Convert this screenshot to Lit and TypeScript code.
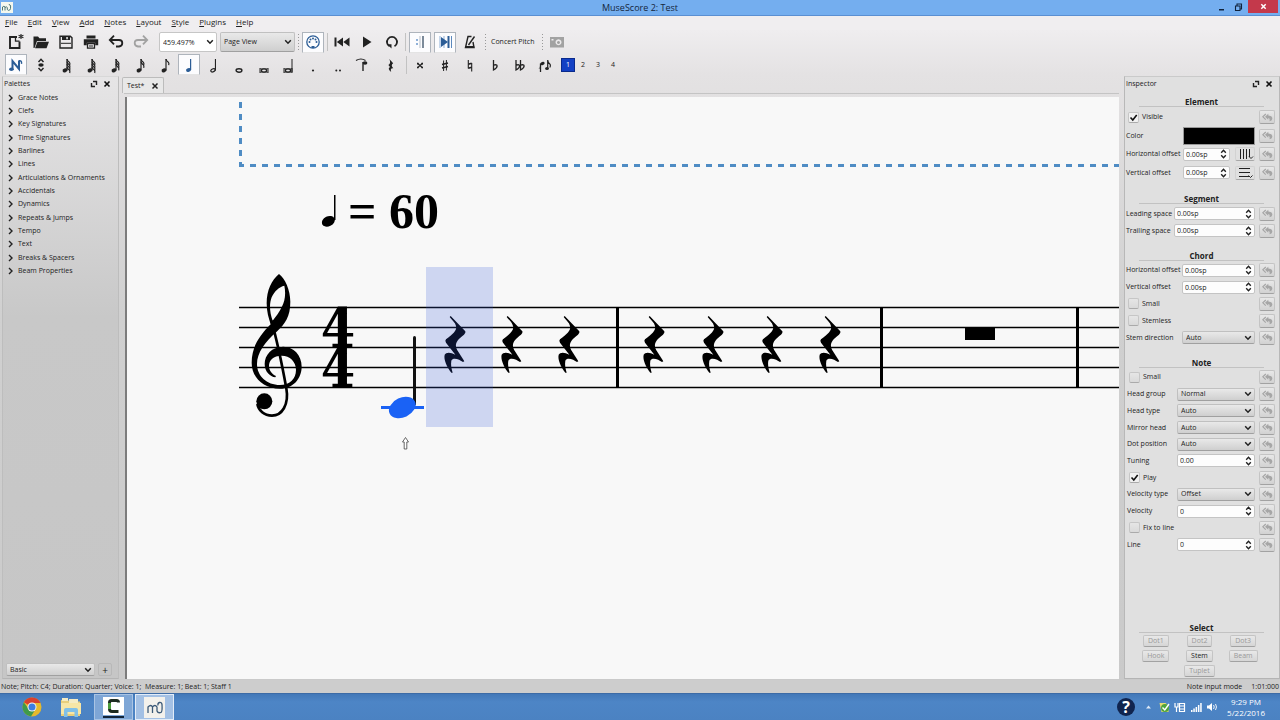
import { LitElement, html, svg, css, nothing } from "lit";
import { customElement } from "lit/decorators.js";
import { classMap } from "lit/directives/class-map.js";

const PALETTES = [
  "Grace Notes", "Clefs", "Key Signatures", "Time Signatures", "Barlines", "Lines",
  "Articulations & Ornaments", "Accidentals", "Dynamics", "Repeats & Jumps", "Tempo",
  "Text", "Breaks & Spacers", "Beam Properties",
];
const MENUS = ["File", "Edit", "View", "Add", "Notes", "Layout", "Style", "Plugins", "Help"];

const icon = (body: unknown, w = 20, h = 18) =>
  html`<svg width=${w} height=${h} viewBox="0 0 ${w} ${h}" aria-hidden="true">${body}</svg>`;

/* A filled note with a stem and a number of flags. */
const flagged = (flags: number) => {
  const rows = Array.from({ length: flags }, (_, i) => 3 + i * 2.6);
  return svg`<ellipse cx="9" cy="14.400" rx="2.500" ry="1.900" transform="rotate(-20 9 14.400)"/>
    <path d="M11 14.500V3" stroke="currentColor" stroke-width="1.200" fill="none"/>
    ${rows.map((y) => svg`<path d=${`M11 ${y}q.3 2 2.3 3.2q1 1 .4 3`} stroke="currentColor" stroke-width="1.2" fill="none"/>`)}`;
};
const breve = svg`<ellipse cx="10" cy="14.5" rx="2.6" ry="1.6" fill="none" stroke="currentColor" stroke-width="1.3"/>
  <path d="M6 12v5M14 12v5" stroke="currentColor" stroke-width="1"/><path d="M6 12.8h8M6 16.2h8" stroke="currentColor" stroke-width=".7"/>`;
const flat = (x: number) => svg`<path d=${`M${x} 4v10q3.6-2 3.6-4t-3.6-.8`} fill="none" stroke="currentColor" stroke-width="1.3"/>`;

const NOTE_ICONS: Array<[string, unknown, boolean]> = [
  ["Note input", svg`<path d="M6.500 14V5L13 13V4.500" fill="none" stroke="#2c5d96" stroke-width="2"/><ellipse cx="5.400" cy="13.200" rx="2.300" ry="1.800" fill="#2c5d96"/><path d="M13 4.800q3-.5 2.500 3" fill="none" stroke="#2c5d96" stroke-width="1.400"/>`, true],
  ["Repitch", svg`<path d="M7.500 6L10 3.2L12.500 6M7.500 12L10 14.800L12.500 12" fill="none" stroke="currentColor" stroke-width="1.400"/><ellipse cx="10" cy="9" rx="2.700" ry="1.800"/>`, false],
  ["64th", flagged(4), false],
  ["32nd triple", flagged(4), false],
  ["32nd", flagged(3), false],
  ["16th", flagged(2), false],
  ["Eighth", flagged(1), false],
  ["Quarter", svg`<g fill="#2c5d96"><ellipse cx="9.500" cy="14" rx="2.500" ry="1.900" transform="rotate(-20 9.500 14)"/><path d="M11 3h1.200v11H11z"/></g>`, true],
  ["Half", svg`<ellipse cx="9" cy="14.300" rx="2.300" ry="1.500" fill="none" stroke="currentColor" stroke-width="1.200" transform="rotate(-25 9 14.300)"/><path d="M10.900 3h1.100v11.500h-1.100z"/>`, false],
  ["Whole", svg`<ellipse cx="10" cy="14.500" rx="2.900" ry="1.700" fill="none" stroke="currentColor" stroke-width="1.400"/>`, false],
  ["Breve", breve, false],
  ["Longa", svg`${breve}<path d="M13.500 3h1v13h-1z"/>`, false],
  ["Dot", svg`<circle cx="10" cy="14.500" r="1.100"/>`, false],
  ["Double dot", svg`<circle cx="8.300" cy="14.500" r="1"/><circle cx="12" cy="14.500" r="1"/>`, false],
  ["Tie", svg`<path d="M3 4.500q5-3 9.500 0" fill="none" stroke="currentColor" stroke-width="1.200"/><path d="M10 15V6" fill="none" stroke="currentColor" stroke-width="1.400"/><ellipse cx="12" cy="7" rx="2.400" ry="1.700"/>`, false],
];
const REST_ICON = svg`<path d="M8.300 3L12.200 7.300Q9.300 9.300 12.300 12.300Q8.800 11.800 10.200 16Q6 12.700 9 11L7.400 9Q10.300 7.300 8.300 3Z"/>`;
const ACCIDENTALS: Array<[string, unknown]> = [
  ["Double sharp", svg`<path d="M7.500 7.300L12.500 11.800M12.500 7.300L7.500 11.800" stroke="currentColor" stroke-width="1.200"/><path d="M7 6.800h1.600v1.600H7zM11.400 6.800h1.600v1.600h-1.600zM7 10.700h1.600v1.600H7zM11.400 10.700h1.600v1.600h-1.600z"/>`],
  ["Sharp", svg`<path d="M8.600 4.500v10.500M11.400 4v10.500" stroke="currentColor" stroke-width="1"/><path d="M7 8.500l6-1.500M7 12l6-1.500" stroke="currentColor" stroke-width="1.600"/>`],
  ["Natural", svg`<path d="M8.300 4v8.500M11.700 7v8.500" stroke="currentColor" stroke-width="1.100"/><path d="M8.300 8.300l3.400-1M8.300 12.300l3.400-1" stroke="currentColor" stroke-width="1.600"/>`],
  ["Flat", flat(8.5)],
  ["Double flat", svg`${flat(6)}${flat(10.5)}`],
  ["Flip", svg`<path d="M5.500 16V7.500" fill="none" stroke="currentColor" stroke-width="1.300"/><ellipse cx="7.500" cy="7.500" rx="2.200" ry="1.600" transform="rotate(-20 7.500 7.500)"/><path d="M4.300 12.500q1.500-1 1.200-3" fill="none" stroke="currentColor"/><path d="M12.700 13V4q0 2.500 2.500 4.500q.6 1.500-.4 3" fill="none" stroke="currentColor" stroke-width="1.200"/><ellipse cx="12" cy="12.500" rx="1.900" ry="1.500"/>`],
];

const FILE_ICONS: Array<[string, unknown, string]> = [
  ["New", svg`<path d="M11 4H4v11h9.500V8.500" fill="none" stroke="currentColor" stroke-width="1.900"/><path d="M9.500 4v4.200h4" fill="none" stroke="currentColor" stroke-width="1.300"/><path d="M15 1v5M12.600 2.300l4.800 2.500M17.400 2.300l-4.800 2.500" stroke="currentColor" stroke-width="1.100"/>`, ""],
  ["Open", svg`<path d="M2.500 15V3.500h4.500l1.500 1.800h6.500V8H6L3.500 15z"/><path d="M6.500 8.800H18L15.500 15.300H4z"/>`, ""],
  ["Save", svg`<path d="M4 3.200h10.300l1.700 1.700V15H4z" fill="none" stroke="currentColor" stroke-width="1.400"/><path d="M6 3h8v4H6z"/><path d="M10.300 4h1.500v2.200h-1.500z" fill="#eee"/><path d="M5 10.300h10" stroke="currentColor"/>`, ""],
  ["Print", svg`<path d="M5.500 2.500h9v3h-9z"/><path d="M2.800 6.200h14.400v6h-3V9.800H5.800v2.400h-3z"/><path d="M6.500 10.500h7v4.700h-7z" fill="none" stroke="currentColor" stroke-width="1.300"/><path d="M8 13h4" stroke="currentColor"/>`, ""],
  ["Undo", svg`<path d="M4.500 7h8.500q3.300 0 3.300 3t-3.300 3.500h-3" fill="none" stroke="currentColor" stroke-width="1.800"/><path d="M8 2.700L3.800 7L8 11.300" fill="none" stroke="currentColor" stroke-width="1.800"/>`, ""],
  ["Redo", svg`<path d="M15.500 7H7q-3.300 0-3.300 3T7 13.500h3" fill="none" stroke="currentColor" stroke-width="1.800"/><path d="M12 2.700L16.200 7L12 11.300" fill="none" stroke="currentColor" stroke-width="1.800"/>`, "dim"],
];

const REST_PATH =
  "M20 0L64 46Q66 50 60 56C44 68 34 78 36 92C38 104 52 118 61 136L57 138C48 132 28 122 22 134C20 146 22 156 26 170L22 170C10 156-2 130 2 116C6 108 20 108 34 116L6 80Q2 74 6 70C26 54 40 44 36 30C34 20 24 12 17 3Z";
const RESTS = [444, 501, 558, 643, 702, 761, 819];
const STAFF = [307, 327, 347, 367, 387];
const BARS = [617, 881, 1077];

const chevron = css`url("data:image/svg+xml,%3Csvg xmlns='http://www.w3.org/2000/svg' viewBox='0 0 8 6'%3E%3Cpath d='M1.200 1.200L4 4.200L6.800 1.200' fill='none' stroke='%23222' stroke-width='1.500'/%3E%3C/svg%3E")`;

type Row = { kind: "check" | "color" | "spin" | "spinAlign" | "select"; label: string; value?: string; on?: boolean };
type Section = { id: string; title: string; rows: Row[] };
const SECTIONS: Section[] = [
  { id: "element", title: "Element", rows: [
    { kind: "check", label: "Visible", on: true },
    { kind: "color", label: "Color", value: "#000000" },
    { kind: "spinAlign", label: "Horizontal offset", value: "0.00sp" },
    { kind: "spinAlign", label: "Vertical offset", value: "0.00sp" },
  ] },
  { id: "segment", title: "Segment", rows: [
    { kind: "spin", label: "Leading space", value: "0.00sp" },
    { kind: "spin", label: "Trailing space", value: "0.00sp" },
  ] },
  { id: "chord", title: "Chord", rows: [
    { kind: "spin", label: "Horizontal offset", value: "0.00sp" },
    { kind: "spin", label: "Vertical offset", value: "0.00sp" },
    { kind: "check", label: "Small" },
    { kind: "check", label: "Stemless" },
    { kind: "select", label: "Stem direction", value: "Auto" },
  ] },
  { id: "note", title: "Note", rows: [
    { kind: "check", label: "Small" },
    { kind: "select", label: "Head group", value: "Normal" },
    { kind: "select", label: "Head type", value: "Auto" },
    { kind: "select", label: "Mirror head", value: "Auto" },
    { kind: "select", label: "Dot position", value: "Auto" },
    { kind: "spin", label: "Tuning", value: "0.00" },
    { kind: "check", label: "Play", on: true },
    { kind: "select", label: "Velocity type", value: "Offset" },
    { kind: "spin", label: "Velocity", value: "0" },
    { kind: "check", label: "Fix to line" },
    { kind: "spin", label: "Line", value: "0" },
  ] },
];

const base = css`
  * { box-sizing: border-box; }
  button, input, select { font: inherit; color: inherit; margin: 0; padding: 0; border: 0; border-radius: 0; background: none; outline: none; min-width: 0; }
  button { display: flex; align-items: center; justify-content: center; white-space: nowrap; }
  svg { display: block; flex: none; fill: currentColor; }
  select { appearance: none; }
  .combo { border: 1px solid #c0c0c0; border-bottom-color: #a0a0a0; border-radius: 2px; padding: 0 3px;
    background: ${chevron} no-repeat right 2px center / 8px 6px, linear-gradient(#e9e9e9, #cfcfcf); }
  .dock-head { display: flex; align-items: center; height: 14px; padding: 0 4px 0 1px; }
  .dock-head h2 { flex: 1; margin: 0; font-size: 7px; font-weight: 400; }
  .dock-head button { width: 13px; height: 12px; }
`;

const dockButtons = html`
  <button aria-label="Float">${icon(svg`<path d="M3 1.500h3.500v3.500M1.500 3v3.500h3.500" fill="none" stroke="#222" stroke-width="1.400"/>`, 8, 8)}</button>
  <button aria-label="Close">${icon(svg`<path d="M1.500 1.500L6.500 6.500M6.500 1.500L1.500 6.500" stroke="#111" stroke-width="1.600"/>`, 8, 8)}</button>`;

@customElement("score-canvas")
export class ScoreCanvas extends LitElement {
  static styles = css`
    :host { display: block; overflow: hidden; background: #f8f8f8; }
    svg { display: block; width: 100%; height: 100%; }
    .tempo { font: bold 50px "Liberation Serif", serif; }
    .meter { font: bold 55px "DejaVu Serif Condensed", "DejaVu Serif", serif; text-anchor: middle; }
  `;
  render() {
    return html`<svg role="img" aria-label="Score">
      <g transform="translate(-127 -97)">
        <path d="M240.500 102V165" stroke="#4f8cc4" stroke-width="3" stroke-dasharray="6 6" fill="none"/>
        <path d="M239 165.500H4000" stroke="#4f8cc4" stroke-width="3" stroke-dasharray="6 6" stroke-dashoffset="1" fill="none"/>
        <ellipse cx="328.300" cy="221.300" rx="6.800" ry="5" transform="rotate(-25 328.300 221.300)"/>
        <path d="M334 195h1.500v25h-1.500z"/>
        <text class="tempo" x="348" y="228">= 60</text>
        ${STAFF.map((y) => svg`<path d=${`M239 ${y + 0.5}H4000`} stroke="#000" stroke-width="1.300"/>`)}
        ${BARS.map((x) => svg`<path d=${`M${x + 0.5} 307V388`} stroke="#000" stroke-width="3"/>`)}
        <g transform="translate(230 170) scale(.3333)">
          <path fill-rule="evenodd" d="M147 312C125 330 110 360 110 400C110 425 116 445 122 463C90 495 65 530 65 578C65 622 100 656 150 656C190 656 215 625 215 590C215 555 190 530 160 530C125 530 104 555 104 582C104 605 120 620 136 622L138 618C125 612 117 600 117 588C117 570 130 557 155 557C180 557 198 575 198 600C198 628 178 645 150 645C110 645 81 618 81 582C81 548 105 515 140 485C165 462 181 440 181 395C181 360 165 325 147 312ZM163 347C168 370 165 395 155 412C147 428 138 440 128 452C118 425 118 400 125 382C133 364 148 350 163 347Z"/>
          <path d="M124 452C135 490 150 550 169 655C178 705 155 737 126 737C102 737 86 722 82 702" fill="none" stroke="#000" stroke-width="8"/>
          <circle cx="103" cy="694" r="24"/>
        </g>
        <text class="meter"><tspan x="338" y="347">4</tspan><tspan x="338" dy="40">4</tspan></text>
        <path d="M414.500 337.500V404" stroke="#111" stroke-width="3" stroke-linecap="round"/>
        <path d="M381 407.500H424" stroke="#1a62f5" stroke-width="3"/>
        <ellipse cx="402.300" cy="407.500" rx="14" ry="9.800" fill="#1a62f5" transform="rotate(-25 402.300 407.500)"/>
        ${RESTS.map((x) => svg`<path transform=${`translate(${x} 316) scale(.3333)`} d=${REST_PATH}/>`)}
        <path d="M965 327.500h30v12.500h-30z"/>
        <path d="M426 267h67v160h-67z" fill="#3458d8" fill-opacity=".21"/>
        <path d="M405.500 437.500L408.500 442H406.800V449H404.200V442H402.500Z" fill="#fff" stroke="#444" stroke-width=".8"/>
      </g>
    </svg>`;
  }
}

@customElement("inspector-panel")
export class InspectorPanel extends LitElement {
  static styles = [base, css`
    :host { display: flex; flex-direction: column; min-width: 0; color: #222; }
    .body { flex: 1; display: flex; flex-direction: column; padding: 6px 4px 0 1px; }
    h3 { margin: 12px 11px 1px 13px; height: 10px; font-size: 8px; line-height: 10px; font-weight: 700; text-align: center; border-bottom: 1px solid #c2c2c2; }
    .element h3 { margin-top: 0; }
    .rows { display: grid; grid-template-columns: minmax(0, 1fr); grid-auto-rows: 1fr; }
    .element .rows { height: 74px; --label: 57px; }
    .segment .rows { height: 34px; --label: 48px; }
    .chord .rows { height: 84px; --label: 56px; }
    .note .rows { height: 184px; --label: 50px; padding-left: 1px; }
    .row { display: flex; align-items: center; gap: 4px; min-width: 0; }
    .field { flex: 1; display: flex; align-items: center; min-width: 0; }
    .field > label { width: var(--label); flex: none; white-space: nowrap; }
    .check { padding-left: 2px; gap: 3px; }
    .field.check > label { width: auto; }
    .tick { appearance: none; width: 11px; height: 11px; border: 1px solid #c6c6c6; border-radius: 2px; background: linear-gradient(#e6e6e6, #d9d9d9); border-bottom-color: #aaa; }
    .tick:checked { background: url("data:image/svg+xml,%3Csvg xmlns='http://www.w3.org/2000/svg' viewBox='0 0 9 9'%3E%3Cpath d='M1.500 4.500L3.800 7L7.700 2' fill='none' stroke='%23111' stroke-width='1.600'/%3E%3C/svg%3E") center / 9px 9px no-repeat, #f0f0f0; }
    .spin { flex: 1; width: 0; height: 13px; padding: 0 12px 0 2px; border: 1px solid #c4c4c4; border-radius: 2px;
      background: url("data:image/svg+xml,%3Csvg xmlns='http://www.w3.org/2000/svg' viewBox='0 0 7 10'%3E%3Cpath d='M1.200 3.700L3.500 1.300L5.800 3.700M1.200 6.300L3.500 8.700L5.800 6.300' fill='none' stroke='%23222' stroke-width='1.400'/%3E%3C/svg%3E") no-repeat right 2px center / 7px 10px, #fdfdfd; }
    .combo { flex: 1; width: 0; height: 13px; }
    .swatch { flex: 1; height: 18px; background: #000; border: 1px solid #fff; outline: 1px solid #999; outline-offset: -1px; }
    .align { flex: none; width: 20px; height: 14px; margin-left: 5px; border: 1px solid #d2d2d2; border-bottom-color: #a8a8a8; border-radius: 2px; }
    .reset { flex: none; width: 16px; height: 14px; border: 1px solid #c4c4c4; border-bottom-color: #a2a2a2; border-radius: 2px; background: linear-gradient(#e8e8e8, #d2d2d2); color: #a6a6a6; }
    .select { margin-top: auto; }
    .pick { display: grid; grid-template-columns: repeat(3, 1fr); grid-auto-rows: 1fr; height: 44px; justify-items: center; align-items: center; padding: 0 10px 0 8px; }
    .pick button { height: 12px; min-width: 24px; padding: 0 4px; border: 1px solid #c4c4c4; border-bottom-color: #a2a2a2; border-radius: 2px; background: linear-gradient(#e8e8e8, #d6d6d6); }
    .pick button:disabled { color: #999; }
    .pick .wide { grid-column: 2; }
  `];
  private control(row: Row, id: string, index: number) {
    switch (row.kind) {
      case "color": return html`<button class="swatch" id=${id} aria-label="Color"></button>`;
      case "select": return html`<select class="combo" id=${id}><option>${row.value}</option></select>`;
      case "spin": return html`<input class="spin" id=${id} .value=${row.value ?? ""} />`;
      default: return html`<input class="spin" id=${id} .value=${row.value ?? ""} />
        <button class="align" aria-label="Snap to grid">${icon(index === 2
          ? svg`<path d="M4.500 1v10M7.500 1v10M10.500 1v10M13.500 1v8" stroke="#222" stroke-width="1"/><path d="M13 8.500l2 2l2-2" fill="none" stroke="#222"/>`
          : svg`<path d="M3 1.500h11M3 5.500h11M3 9.500h11" stroke="#222" stroke-width="1"/><path d="M12.500 8.500l2 2l2-2" fill="none" stroke="#222"/>`, 18, 12)}</button>`;
    }
  }
  render() {
    return html`
      <div class="dock-head"><h2>Inspector</h2>${dockButtons}</div>
      <div class="body">
        ${SECTIONS.map((s) => html`<section class=${s.id}>
          <h3>${s.title}</h3>
          <div class="rows">${s.rows.map((row, i) => {
            const id = `${s.id}-${i}`;
            return html`<div class="row">
              ${row.kind === "check"
                ? html`<div class="field check"><input class="tick" type="checkbox" id=${id} ?checked=${row.on} /><label for=${id}>${row.label}</label></div>`
                : html`<div class="field"><label for=${id}>${row.label}</label>${this.control(row, id, i)}</div>`}
              <button class="reset" aria-label="Reset ${row.label}">${icon(svg`<path d="M3.800 1L.8 3.800L3.800 6.600" fill="none" stroke="currentColor" stroke-width="1.200"/><path d="M6.300 .8L3 3.800L6.300 6.800V5.100Q8.300 5.200 7.400 8.300Q10.600 7.600 10.300 5Q9.800 2.700 6.300 2.600Z"/>`, 11, 9)}</button>
            </div>`;
          })}</div>
        </section>`)}
        <section class="select">
          <h3>Select</h3>
          <div class="pick">
            <button disabled>Dot1</button><button disabled>Dot2</button><button disabled>Dot3</button>
            <button disabled>Hook</button><button>Stem</button><button disabled>Beam</button>
            <button class="wide" disabled>Tuplet</button>
          </div>
        </section>
      </div>`;
  }
}

@customElement("app-root")
export class AppRoot extends LitElement {
  static styles = [base, css`
    :host { display: flex; flex-direction: column; height: 100vh; min-width: 0; overflow: hidden; font: 7px/10px "Open Sans", sans-serif; color: #222; background: #e6e4e5; }
    .title { display: flex; align-items: center; height: 16px; background: #74aeef; border-bottom: 1px solid #5a8fd2; }
    .title h1 { flex: 1; margin: 0; font-size: 9px; line-height: 15px; font-weight: 400; text-align: center; color: #14263c; }
    .logo { width: 12px; height: 11px; background: #f4f7ee; color: #3a6a6a; margin: 0 54px 0 1px; }
    .win { display: flex; align-self: flex-start; align-items: center; }
    .win button { width: 17px; height: 13px; color: #10233c; }
    .win .close { width: 30px; margin: 0 2px 0 1px; background: #c4394b; color: #fff; }
    .menus { display: flex; gap: 10px; height: 14px; padding-left: 5px; background: #f0eef0; font-size: 8px; line-height: 12px; }
    .menus button { height: 12px; }
    .menus span { text-decoration: underline; }
    .bars { background: linear-gradient(#efedef, #e4e2e3); }
    .bar { display: flex; align-items: center; height: 24px; padding-left: 4px; color: #222; }
    .bar.notes { height: 21px; }
    .keys { display: grid; grid-auto-flow: column; grid-auto-columns: 1fr; justify-items: center; align-items: center; }
    .keys button, .toggle { width: 22px; height: 21px; }
    .files { width: 149px; }
    .values { width: 371px; }
    .play { width: 74px; margin: 0 1px 0 2px; }
    .accs { width: 150px; }
    .keys .on, .toggle.on { background: #fcfcfe; border: 1px solid #aeb4bc; border-bottom-color: #e4e4e4; }
    .dim { color: #a2a2a2; }
    .zoom { width: 58px; height: 20px; margin: 0 3px 0 6px; padding: 0 3px; border: 1px solid #c6c6c6; border-radius: 2px; background: ${chevron} no-repeat right 2px center / 8px 6px, #fff; }
    .view { width: 75px; height: 20px; }
    .grip { width: 3px; height: 18px; margin: 0 2px; background: radial-gradient(circle, #999 0 1px, transparent 1px) 0 0 / 3px 3px; }
    .grip.wide { margin: 0 4px 0 3px; }
    .rule { width: 1px; height: 18px; background: #c2c2c2; }
    .after { margin-left: 3px; }
    .pair { display: flex; gap: 3px; margin: 0 3px; }
    .concert { margin-right: 4px; }
    .rest { width: 22px; margin: 0 4px 0 5px; }
    .voices { display: flex; align-items: center; gap: 1px; margin-left: 4px; }
    .voices button { width: 14px; height: 14px; }
    .voices .on { background: #1340c4; color: #fff; border: 1px solid #0a2a8c; }
    .main { flex: 1; display: grid; grid-template-columns: 117px minmax(0, 1fr) 156px; gap: 5px; min-height: 0; padding: 1px 0 1px 2px; background: linear-gradient(#e4e2e3, #d0d0d0 240px, #cacaca); }
    .palettes { display: flex; flex-direction: column; border: 1px solid #bbb; border-color: #d8d8d8 #bdbdbd #b4b4b4 #bdbdbd; background: linear-gradient(#e6e5e6, #c8c8c8 240px, #c6c6c6); }
    .palettes .dock-head { padding-right: 5px; }
    .list { flex: 1; margin: 0; padding: 0 0 0 4px; list-style: none; }
    .list button { height: 13px; gap: 5px; line-height: 13px; }
    .list li:nth-child(3n) { padding-bottom: 1px; }
    .foot { display: flex; gap: 3px; padding: 0 6px 2px 3px; }
    .foot .combo { flex: 1; height: 13px; }
    .add { width: 14px; height: 13px; border: 1px solid #b8b8b8; border-radius: 2px; font-size: 10px; }
    .doc { display: flex; flex-direction: column; min-width: 0; }
    .tabs { display: flex; align-items: flex-end; height: 18px; border-bottom: 1px solid #c4c4c4; }
    .tab { display: flex; align-items: center; gap: 6px; height: 16px; padding: 1px 3px 0 4px; margin-left: -2px; border: 1px solid #bcbcbc; border-bottom: 0; background: #e8e8e8; border-radius: 2px 2px 0 0; }
    .tab .shut { width: 10px; height: 12px; }
    score-canvas { flex: 1; min-height: 0; margin: 3px 0 0 1px; border-left: 2px solid #7c7c7c; }
    inspector-panel { border: 1px solid #b8b8b8; border-color: #cacaca #b8b8b8 #b4b4b4; background: #e0e0e0; }
    .status { display: flex; align-items: center; justify-content: space-between; height: 13px; padding: 0 1px; background: #cdcdcd; }
    .status .right { display: flex; gap: 9px; }
    .task { display: flex; align-items: center; height: 27px; background: linear-gradient(#4278b8, #4d85c6 30%, #4b82c2); border-top: 1px solid #3c6ba6; color: #fff; padding-left: 12px; }
    .apps { display: flex; align-items: center; flex: 1; }
    .apps button { width: 39px; height: 26px; }
    .apps .open { border: 1px solid #a9c4e4; background: #7ea6d6; margin-left: 4px; }
    .apps .active { background: #a3c0e4; border-color: #e2ecf8; margin-left: 2px; }
    .tray { display: flex; align-items: center; gap: 4px; }
    .clock { margin: 0 15px 0 5px; font-size: 8px; line-height: 11px; text-align: center; }
  `];

  render() {
    return html`
      <header class="title">
        <div class="logo">${icon(svg`<path d="M1.500 8.500V5q1.500-1.500 2.500 0v3.500M4 5.500q1.300-1.500 2.300 0v2q1 1.500 2.500.5q1-1 .8-4q-.3-1.500-1.800-1.500" fill="none" stroke="currentColor" stroke-width=".9"/>`, 12, 11)}</div>
        <h1>MuseScore 2: Test</h1>
        <div class="win">
          <button aria-label="Minimize">${icon(svg`<path d="M2 7h5v1.500H2z"/>`, 9, 10)}</button>
          <button aria-label="Restore">${icon(svg`<path d="M1.500 4h4.500v4.500H1.500zM3 3.500V2h4.500v5H6" fill="none" stroke="currentColor" stroke-width="1.100"/>`, 9, 10)}</button>
          <button class="close" aria-label="Close">${icon(svg`<path d="M1.300 1.300L5.700 5.700M5.700 1.300L1.300 5.700" stroke="currentColor" stroke-width="1.500"/>`, 7, 7)}</button>
        </div>
      </header>
      <nav class="menus">${MENUS.map((m) => html`<button><span>${m[0]}</span>${m.slice(1)}</button>`)}</nav>
      <div class="bars">
        <div class="bar">
          <div class="keys files">${FILE_ICONS.map(([n, i, c]) => html`<button class=${c || nothing} aria-label=${n}>${icon(i)}</button>`)}</div>
          <input class="zoom" aria-label="Zoom" value="459.497%" />
          <select class="combo view" aria-label="View mode"><option>Page View</option></select>
          <div class="grip"></div>
          <button class="toggle on" aria-label="MIDI input">${icon(svg`<circle cx="9" cy="9" r="6.200" fill="none" stroke="#2c5d96" stroke-width="1.300"/><g fill="#2c5d96"><circle cx="5.500" cy="9" r="1"/><circle cx="6.500" cy="6.400" r="1"/><circle cx="9" cy="5.400" r="1"/><circle cx="11.500" cy="6.400" r="1"/><circle cx="12.500" cy="9" r="1"/><path d="M7.500 13h3v2h-3z"/></g>`, 18, 18)}</button>
          <div class="rule after"></div>
          <div class="keys play">
            <button aria-label="Rewind">${icon(svg`<path d="M2.500 4.500h2v9h-2zM11 4.500v9L4.800 9zM17.500 4.500v9L11.300 9z"/>`)}</button>
            <button aria-label="Play">${icon(svg`<path d="M6 3.500L14.500 9L6 14.500z"/>`)}</button>
            <button aria-label="Loop">${icon(svg`<path d="M7.500 13.300A5 5 0 1 1 12.500 13.300" fill="none" stroke="currentColor" stroke-width="1.800"/><path d="M5 11.200h4.500V15.500z"/>`)}</button>
          </div>
          <div class="rule"></div>
          <div class="pair">
            <button class="toggle on" aria-label="Play repeats">${icon(svg`<path d="M5 6h2v2H5zM5 10h2v2H5z" fill="#8fb0d8"/><path d="M8.500 3h1v12h-1z" fill="#b4bcc6"/><path d="M11 3h2v12h-2z" fill="#7c8a9a"/>`, 18, 18)}</button>
            <button class="toggle on" aria-label="Pan score">${icon(svg`<path d="M4 3v12M8 3v12" stroke="#8fb0d8"/><path d="M5 4L12 9L5 14z" fill="#2c5d96"/><path d="M12.500 3v12" stroke="#2c5d96" stroke-width="2"/><path d="M15.500 3v12" stroke="#5b88bd"/>`, 18, 18)}</button>
          </div>
          <button class="toggle" aria-label="Metronome">${icon(svg`<path d="M11.500 3.500H8L5.500 14.500h8.500L13 9" fill="none" stroke="currentColor" stroke-width="1.400"/><path d="M8.500 12L14.500 3.500" stroke="currentColor" stroke-width="1.400"/><path d="M5.300 13h8.900v2H5z"/>`)}</button>
          <div class="grip wide"></div>
          <button class="concert">Concert Pitch</button>
          <div class="grip"></div>
          <button class="toggle dim" aria-label="Image capture">${icon(svg`<path fill-rule="evenodd" d="M3 4h14v10.500H3zM11.500 6.300a3 3 0 1 0 .01 0zM11.500 7.900a1.500 1.500 0 1 1-.01 0zM4.500 6v1.500h2V6z"/>`)}</button>
        </div>
        <div class="bar notes">
          <div class="keys values">${NOTE_ICONS.map(([n, i, on]) => html`<button class=${classMap({ on })} aria-label=${n}>${icon(i)}</button>`)}</div>
          <button class="rest" aria-label="Rest">${icon(REST_ICON)}</button>
          <div class="rule"></div>
          <div class="keys accs">${ACCIDENTALS.map(([n, i]) => html`<button aria-label=${n}>${icon(i)}</button>`)}</div>
          <div class="voices">${[1, 2, 3, 4].map((v) => html`<button class=${classMap({ on: v === 1 })}>${v}</button>`)}</div>
        </div>
      </div>
      <main class="main">
        <aside class="palettes">
          <div class="dock-head"><h2>Palettes</h2>${dockButtons}</div>
          <ul class="list">${PALETTES.map((p) => html`<li><button>${icon(svg`<path d="M2 1L5 4L2 7" fill="none" stroke="#222" stroke-width="1.400"/>`, 6, 8)}${p}</button></li>`)}</ul>
          <div class="foot"><select class="combo" aria-label="Workspace"><option>Basic</option></select><button class="add" aria-label="Add workspace">+</button></div>
        </aside>
        <section class="doc">
          <div class="tabs"><div class="tab">Test*<button class="shut" aria-label="Close tab">${icon(svg`<path d="M1.500 1.500L6.500 6.500M6.500 1.500L1.500 6.500" stroke="#222" stroke-width="1.500"/>`, 8, 8)}</button></div></div>
          <score-canvas></score-canvas>
        </section>
        <inspector-panel></inspector-panel>
      </main>
      <div class="status">
        <span>Note; Pitch: C4; Duration: Quarter; Voice: 1;&nbsp; Measure: 1; Beat: 1; Staff 1</span>
        <span class="right"><span>Note input mode</span><span>1:01:000</span></span>
      </div>
      <footer class="task">
        <div class="apps">
          <button aria-label="Chrome">${icon(svg`<circle cx="10" cy="10" r="9.500" fill="#e5b92c"/><path d="M10 10L1.800 5.200A9.500 9.500 0 0 1 18.600 6H10z" fill="#d8412f"/><path d="M1.800 5.200A9.500 9.500 0 0 0 9 19.500L13 13L6.300 11.500z" fill="#3f9a4a"/><circle cx="10" cy="10" r="4.500" fill="#f4f4f4"/><circle cx="10" cy="10" r="3.500" fill="#3d7de0"/>`, 20, 20)}</button>
          <button aria-label="Files">${icon(svg`<path d="M1 3h7l1.500 1.500H20V19H1z" fill="#e8cf7c"/><path d="M2 1h6v3H2zM9 2h9v4H9z" fill="#f5ecc4"/><path d="M1 6h20v11H1z" fill="#f6e6a6"/><path d="M4 20v-7q0-2 2-2h10q2 0 2 2v7h-3.500v-5h-7v5z" fill="#7fc0e8"/>`, 22, 21)}</button>
          <button class="open" aria-label="Camtasia">${icon(svg`<path d="M0 0h21v18H0z" fill="#fff"/><path d="M0 19h21v2H0z" fill="#10243a"/><path d="M15.500 5.500Q15.500 3.500 13.500 3.500H8.500Q6.500 3.500 6.500 5.500V12Q6.500 14.500 9 14.500H15.500" fill="none" stroke="#1d2b20" stroke-width="3"/><path d="M6.500 6V12" stroke="#4a9a3a" stroke-width="3"/>`, 21, 21)}</button>
          <button class="open active" aria-label="MuseScore">${icon(svg`<path d="M0 0h21v21H0z" fill="#f3f1ec"/><path d="M4 16V10q3-3 4.500 0v6M8.500 10q2.500-3 4.500 0v4q1 2.500 4 1.500q1.500-1 1-8q-.5-2.500-2.500-2t-1.500 3" fill="none" stroke="#3c5a78" stroke-width="1.300"/>`, 21, 21)}</button>
        </div>
        <div class="tray">
          <svg width="20" height="20" viewBox="0 0 20 20" aria-hidden="true"><circle cx="10" cy="10" r="9" fill="#10244e"/><text x="10" y="16" text-anchor="middle" font-size="16" font-weight="700" fill="#fff">?</text></svg>
          ${icon(svg`<path d="M6 7.500L11 7.500L8.500 4.500z" fill="#dce8f6"/>`, 14, 12)}
          ${icon(svg`<path d="M1.500 2h6l3 3v6h-7z" fill="#e6dc72"/><circle cx="7" cy="7" r="4" fill="#4fa33c"/><path d="M4.500 6.500L6.800 9L11 3" fill="none" stroke="#fff" stroke-width="1.400"/>`, 12, 12)}
          ${icon(svg`<path d="M1 2v4h3V2M2.500 6v5" fill="none" stroke="#fff" stroke-width="1.200"/><path d="M5.500 2.500h5v8h-5zM5.500 5h5M5.500 8h5" fill="none" stroke="#fff" stroke-width="1.200"/>`, 12, 12)}
          ${icon(svg`<path d="M1 9h1.500v2H1zM3.300 7.500h1.500V11H3.300zM5.600 6h1.500v5H5.600zM7.900 4h1.500v7H7.900zM10.200 2h1.500v9h-1.500z" fill="#fff"/>`, 12, 12)}
          ${icon(svg`<path d="M1 4.500h2L6 2v8L3 7.500H1z" fill="#fff"/><path d="M7.500 4q1.500 2 0 4M9.500 3q2 3 0 6" fill="none" stroke="#fff" stroke-width=".9"/>`, 12, 12)}
          <div class="clock">9:29 PM<br />5/22/2016</div>
        </div>
      </footer>`;
  }
}
